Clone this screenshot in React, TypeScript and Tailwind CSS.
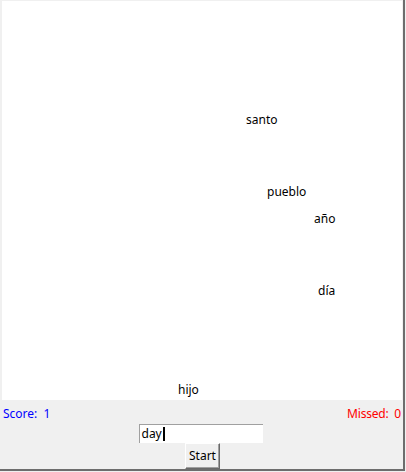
const words = [
  { text: "santo", x: 246, y: 111 },
  { text: "pueblo", x: 267, y: 183 },
  { text: "año", x: 314, y: 210 },
  { text: "día", x: 318, y: 282 },
  { text: "hijo", x: 178, y: 381 },
];

export default function App() {
  return (
    <div
      className="w-[406px] h-[472px] bg-[#f0f0f0] text-[12px] text-black"
      style={{ fontFamily: '"Noto Sans", "Segoe UI", Tahoma, sans-serif' }}
    >
      <div className="w-[405px] h-[471px] border-r-2 border-b-2 border-r-[#6d6d6d] border-b-[#6d6d6d] flex flex-col">
        {/* canvas */}
        <div className="relative ml-[2px] mt-[1px] w-[400px] h-[399px] bg-white overflow-hidden">
          {words.map((w) => (
            <span key={w.text} className="absolute leading-[16px]" style={{ left: w.x - 2, top: w.y }}>
              {w.text}
            </span>
          ))}
        </div>

        {/* score row */}
        <div className="flex justify-between items-center h-[24px] pt-[3px] pl-[3px] pr-[2px]">
          <span className="text-[#0000ff] whitespace-pre">Score:  1</span>
          <span className="text-[#ff0000] whitespace-pre tracking-[-0.2px]">Missed:  0</span>
        </div>

        {/* entry */}
        <div className="flex justify-center">
          <div className="ml-[-2px] w-[124px] h-[19px] bg-white border-t border-l border-[#a0a0a0] flex items-center pl-[2px] leading-none">
            <span>day</span>
            <span className="w-[2px] h-[14px] bg-black ml-[1px]" />
          </div>
        </div>

        {/* button */}
        <div className="flex justify-center">
          <button className="ml-[2px] w-[35px] h-[26px] bg-[#f0f0f0] border border-t-white border-l-white border-r-[#696969] border-b-[#696969] shadow-[inset_-1px_-1px_0_#a0a0a0] leading-none">
            Start
          </button>
        </div>
      </div>
    </div>
  );
}
